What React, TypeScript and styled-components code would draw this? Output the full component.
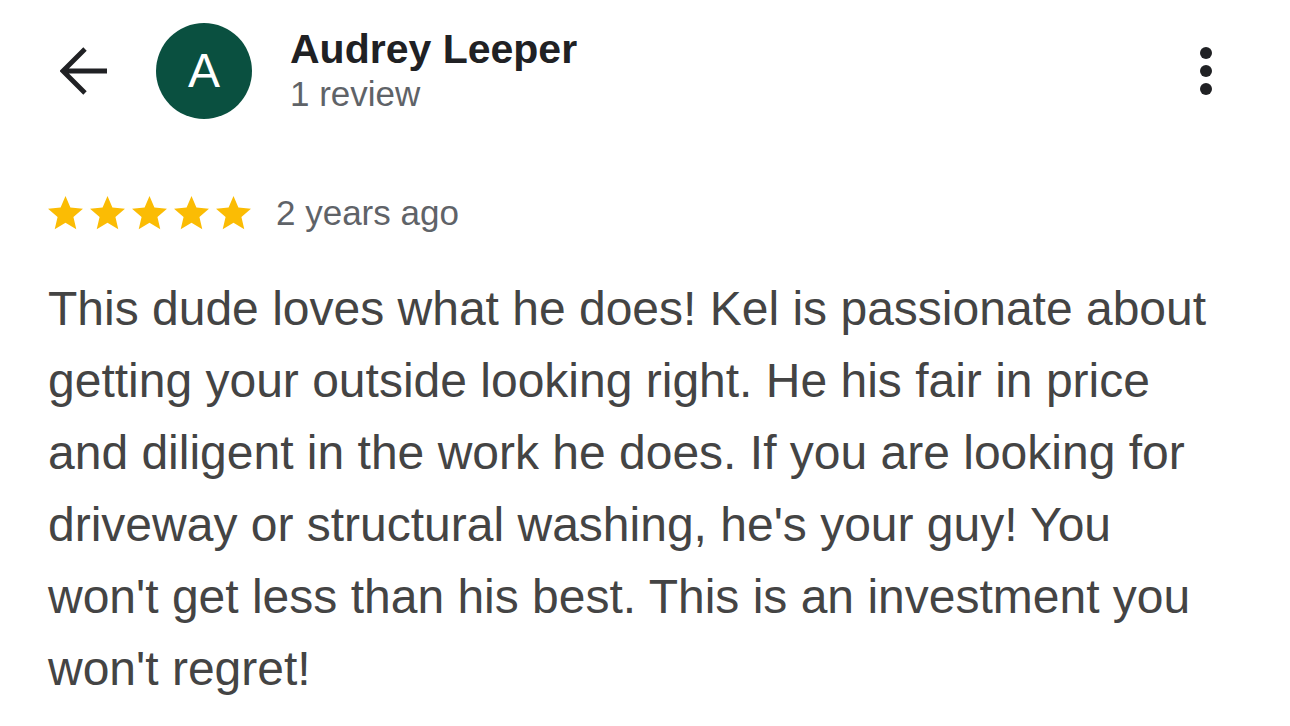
import React from 'react';
import styled, { createGlobalStyle } from 'styled-components';

const GlobalStyle = createGlobalStyle`
  body {
    margin: 0;
    background: #fff;
    font-family: 'Liberation Sans', Arial, Helvetica, sans-serif;
  }
`;

const Page = styled.div`
  width: 1290px;
  min-height: 726px;
  background: #fff;
`;

const Header = styled.div`
  display: flex;
  align-items: center;
  padding: 23px 78px 0 60px;
  height: 96px;
`;

const BackButton = styled.button`
  display: flex;
  align-items: center;
  justify-content: center;
  width: 48px;
  height: 48px;
  padding: 0;
  border: none;
  background: none;
  color: #202124;
  cursor: pointer;
`;

const Avatar = styled.div`
  width: 96px;
  height: 96px;
  margin-left: 48px;
  border-radius: 50%;
  background: #0a5040;
  color: #fff;
  display: flex;
  align-items: center;
  justify-content: center;
  font-size: 48px;
  line-height: 1;
  flex-shrink: 0;
`;

const Author = styled.div`
  display: flex;
  flex-direction: column;
  margin-left: 38px;
  flex: 1;
`;

const Name = styled.div`
  font-size: 41px;
  font-weight: 700;
  line-height: 46px;
  color: #202124;
`;

const Meta = styled.div`
  font-size: 35px;
  line-height: 44px;
  color: #5f6368;
`;

const MoreButton = styled.button`
  display: flex;
  flex-direction: column;
  align-items: center;
  gap: 6px;
  padding: 0;
  border: none;
  background: none;
  cursor: pointer;
`;

const Dot = styled.span`
  width: 12px;
  height: 12px;
  border-radius: 50%;
  background: #202124;
`;

const Review = styled.div`
  padding: 0 72px 0 48px;
`;

const RatingRow = styled.div`
  display: flex;
  align-items: center;
  margin-top: 76px;
  height: 36px;
`;

const Stars = styled.div`
  display: flex;
  gap: 7px;
`;

const When = styled.span`
  margin-left: 25px;
  font-size: 35px;
  line-height: 36px;
  color: #5f6368;
`;

const Body = styled.p`
  margin: 42px 0 0;
  font-size: 48px;
  line-height: 72px;
  color: #444;
`;

const Star = () => (
  <svg width="35" height="33.5" viewBox="2 2 20 19.2" aria-hidden="true">
    <path
      fill="#fbbc04"
      d="M12 17.27L18.18 21l-1.64-7.03L22 9.24l-7.19-.61L12 2 9.19 8.63 2 9.24l5.46 4.73L5.82 21z"
    />
  </svg>
);

const ArrowBack = () => (
  <svg width="48" height="48" viewBox="0 0 48 48" aria-hidden="true">
    <path
      d="M47 24H3M25 2L3 24l22 22"
      fill="none"
      stroke="currentColor"
      strokeWidth="4.8"
    />
  </svg>
);

const App = () => {
  return (
    <Page>
      <GlobalStyle />
      <Header>
        <BackButton aria-label="Back">
          <ArrowBack />
        </BackButton>
        <Avatar>A</Avatar>
        <Author>
          <Name>Audrey Leeper</Name>
          <Meta>1 review</Meta>
        </Author>
        <MoreButton aria-label="More options">
          <Dot />
          <Dot />
          <Dot />
        </MoreButton>
      </Header>
      <Review>
        <RatingRow>
          <Stars>
            {[0, 1, 2, 3, 4].map((i) => (
              <Star key={i} />
            ))}
          </Stars>
          <When>2 years ago</When>
        </RatingRow>
        <Body>
          This dude loves what he does! Kel is passionate about getting your
          outside looking right. He his fair in price and diligent in the work
          he does. If you are looking for driveway or structural washing, he's
          your guy! You won't get less than his best. This is an investment you
          won't regret!
        </Body>
      </Review>
    </Page>
  );
};

export default App;
